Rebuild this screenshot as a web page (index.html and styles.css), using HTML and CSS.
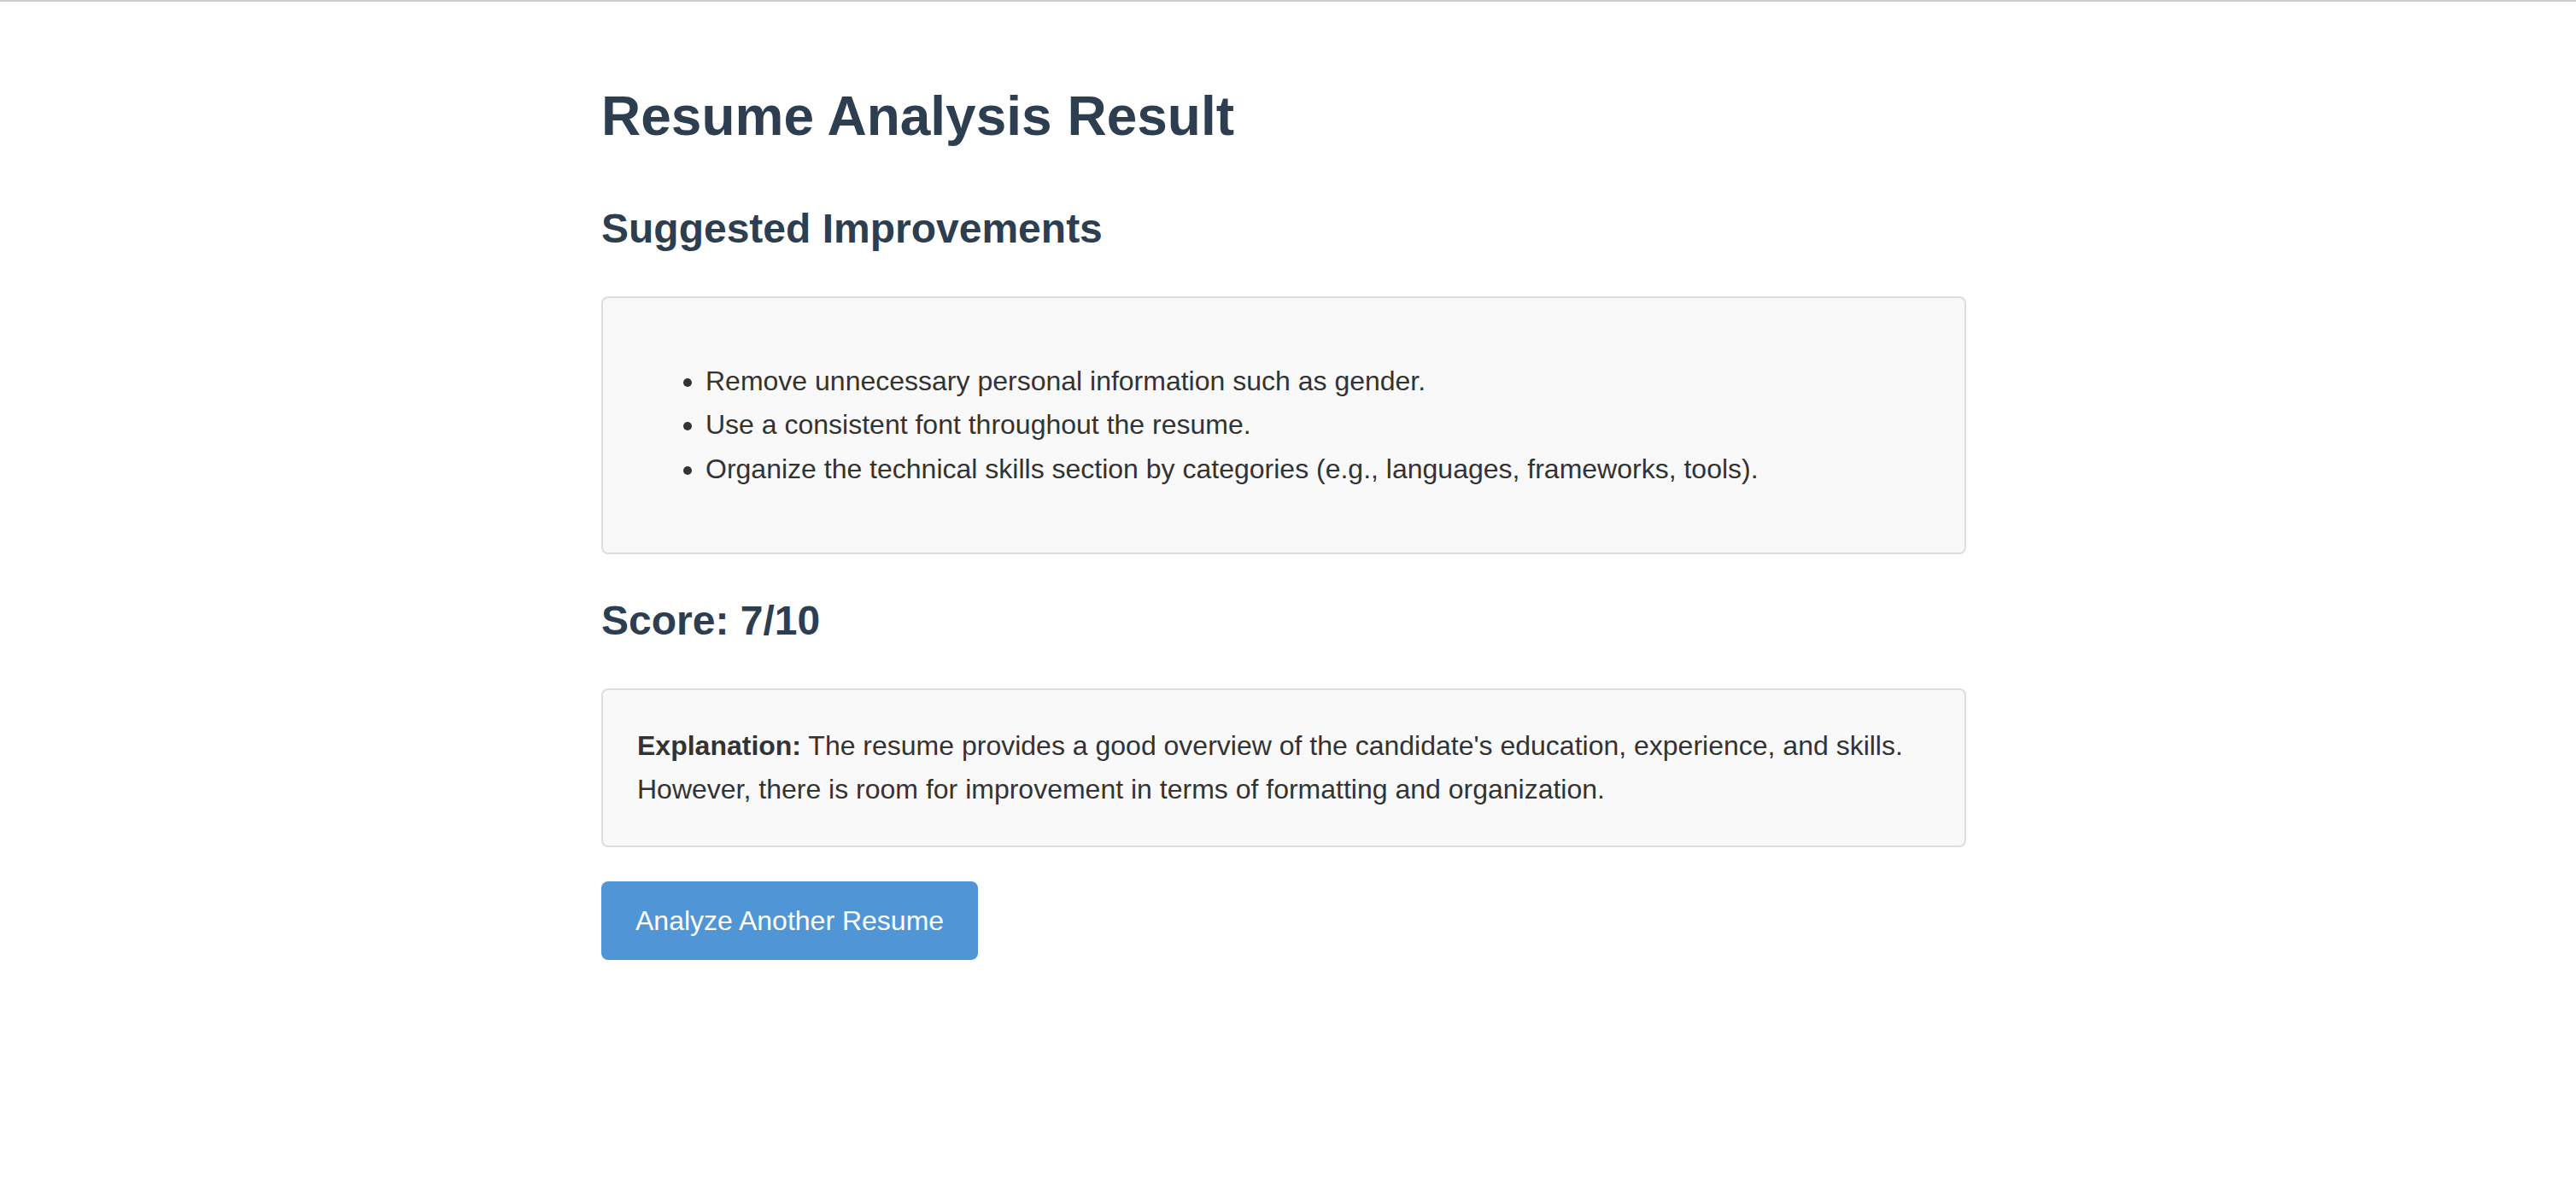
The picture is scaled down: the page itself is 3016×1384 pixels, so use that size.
FILE: index.html
```html
<!DOCTYPE html>
<html lang="en">
<head>
<meta charset="utf-8">
<title>Resume Analysis Result</title>
<link rel="stylesheet" href="styles.css">
</head>
<body>
<div class="topline"></div>
<main class="container">
  <h1 class="title">Resume Analysis Result</h1>
  <h2 class="section-title">Suggested Improvements</h2>
  <div class="panel">
    <ul class="suggestions">
      <li>Remove unnecessary personal information such as gender.</li>
      <li>Use a consistent font throughout the resume.</li>
      <li>Organize the technical skills section by categories (e.g., languages, frameworks, tools).</li>
    </ul>
  </div>
  <h2 class="section-title">Score: 7/10</h2>
  <div class="panel">
    <p class="explanation"><strong>Explanation:</strong> The resume provides a good overview of the candidate's education, experience, and skills. However, there is room for improvement in terms of formatting and organization.</p>
  </div>
  <button class="btn" type="button">Analyze Another Resume</button>
</main>
</body>
</html>
```
FILE: styles.css
```css
html, body {
  margin: 0;
  padding: 0;
  background: #ffffff;
}

body {
  font-family: "Liberation Sans", Arial, Helvetica, sans-serif;
  font-size: 32px;
  line-height: 1.6;
  color: #333333;
}

.topline {
  height: 2px;
  background: #cccccc;
}

.container {
  width: 1598px;
  margin: 0 auto;
  padding: 40px 10px 40px 0;
  box-sizing: content-box;
}

.title {
  font-size: 64px;
  font-weight: bold;
  color: #2c3e50;
  margin: 43px 0;
}

.section-title {
  font-size: 48px;
  font-weight: bold;
  color: #2c3e50;
  margin: 40px 0;
}

.panel {
  background: #f9f9f9;
  border: 2px solid #dddddd;
  border-radius: 8px;
  padding: 40px;
}

.suggestions {
  margin: 32px 0;
  padding-left: 80px;
}

.explanation {
  margin: 0;
}

.btn {
  display: inline-block;
  margin-top: 40px;
  background: #5096d6;
  color: #ffffff;
  border: none;
  border-radius: 8px;
  padding: 24px 40px;
  font-family: "Liberation Sans", Arial, Helvetica, sans-serif;
  font-size: 32px;
  line-height: 44px;
  cursor: pointer;
}
```
